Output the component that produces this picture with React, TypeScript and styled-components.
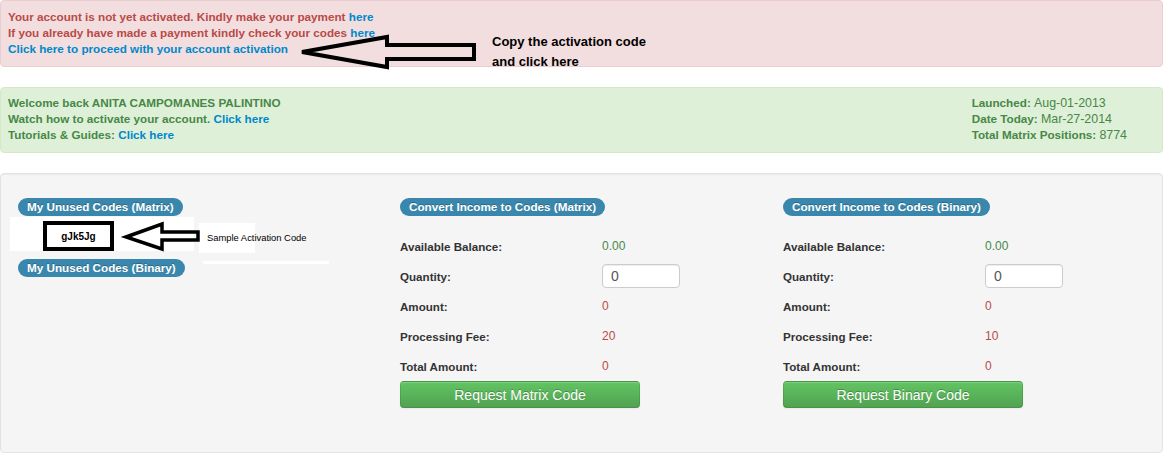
import React from 'react';
import styled, { createGlobalStyle } from 'styled-components';

const GlobalStyle = createGlobalStyle`
  html, body {
    margin: 0;
    padding: 0;
    background: #fff;
  }
  body {
    font-family: "Liberation Sans", Arial, sans-serif;
    color: #333;
  }
`;

const Page = styled.div`
  width: 1163px;
`;

type Tone = 'error' | 'success';

const tones = {
    error: { bg: '#f2dede', border: '#ebccd1', text: '#b94a48', pad: '8px 35px 9px 7px' },
    success: { bg: '#dff0d8', border: '#d6e9c6', text: '#468847', pad: '7px 35px 9px 7px' },
};

const Alert = styled.div<{ $tone: Tone }>`
  position: relative;
  display: flex;
  justify-content: space-between;
  padding: ${p => tones[p.$tone].pad};
  margin-bottom: 20px;
  border: 1px solid ${p => tones[p.$tone].border};
  border-radius: 4px;
  background: ${p => tones[p.$tone].bg};
  color: ${p => tones[p.$tone].text};
  font-size: 11.7px;
  font-weight: bold;
  line-height: 16px;
`;

const Lines = styled.div`
  display: flex;
  flex-direction: column;
  white-space: nowrap;
`;

const Link = styled.a`
  color: #0088cc;
  font-weight: bold;
  text-decoration: none;
  cursor: pointer;
`;

const Stat = styled.div`
  font-size: 11.7px;
`;

const StatValue = styled.span`
  font-weight: normal;
  font-size: 12.4px;
`;

// hand-drawn callout pasted over the activation notice
const CalloutArrow = styled.svg`
  position: absolute;
  left: 297px;
  top: 32px;
  overflow: visible;
`;

const CalloutText = styled.div`
  position: absolute;
  left: 491px;
  top: 31px;
  color: #000;
  font-size: 13px;
  font-weight: bold;
  line-height: 20px;
  white-space: nowrap;
`;

const Well = styled.div`
  display: grid;
  grid-template-columns: 382px 383px 1fr;
  padding: 24px 17px 44px;
  background: #f5f5f5;
  border: 1px solid #e3e3e3;
  border-radius: 4px;
  box-shadow: inset 0 1px 1px rgba(0, 0, 0, 0.05);
`;

const Column = styled.div`
  display: flex;
  flex-direction: column;
  align-items: flex-start;
`;

const Badge = styled.span`
  display: inline-block;
  padding: 2px 9px;
  border-radius: 9px;
  background: #3a87ad;
  color: #fff;
  font-size: 11.7px;
  font-weight: bold;
  line-height: 14px;
  white-space: nowrap;
  text-shadow: 0 -1px 0 rgba(0, 0, 0, 0.25);
`;

const CodeStrip = styled.div`
  position: relative;
  display: flex;
  align-items: flex-start;
  height: 43px;
  margin-left: -8px;
`;

const CodeCard = styled.div`
  box-sizing: border-box;
  width: 184px;
  height: 34px;
  margin-top: 1px;
  padding: 4px 0 0 33px;
  background: #fff;
`;

const CodeBox = styled.div`
  box-sizing: border-box;
  width: 71px;
  height: 30px;
  border: 4px solid #000;
  display: flex;
  align-items: center;
  justify-content: center;
  color: #000;
  font-size: 10px;
  font-weight: bold;
`;

const NoteCard = styled.div`
  box-sizing: border-box;
  width: 56px;
  height: 30px;
  margin: 7px 0 0 5px;
  padding-left: 8px;
  background: #fff;
  color: #000;
  font-size: 9.4px;
  line-height: 30px;
  white-space: nowrap;
`;

const PointerArrow = styled.svg`
  position: absolute;
  left: 110px;
  top: 3px;
  overflow: visible;
`;

const Underline = styled.div`
  position: absolute;
  left: 193px;
  top: 45px;
  width: 126px;
  height: 3px;
  background: #fff;
`;

const FormRows = styled.div`
  margin-top: 15px;
  display: flex;
  flex-direction: column;
`;

const Row = styled.div`
  display: grid;
  grid-template-columns: 202px auto;
  align-items: center;
  height: 30px;
`;

const Label = styled.span`
  color: #333;
  font-size: 11.6px;
  font-weight: bold;
`;

const Value = styled.span<{ $color: string }>`
  color: ${p => p.$color};
  font-size: 12px;
`;

const QtyInput = styled.input`
  box-sizing: border-box;
  width: 78px;
  height: 24px;
  padding: 2px 8px;
  border: 1px solid #ccc;
  border-radius: 4px;
  background: #fff;
  box-shadow: inset 0 1px 1px rgba(0, 0, 0, 0.075);
  color: #555;
  font-family: inherit;
  font-size: 14px;
  outline: none;
`;

const RequestButton = styled.button`
  box-sizing: border-box;
  width: 240px;
  height: 27px;
  padding: 0;
  border: 1px solid;
  border-color: rgba(0, 0, 0, 0.1) rgba(0, 0, 0, 0.1) rgba(0, 0, 0, 0.25);
  border-radius: 4px;
  background: linear-gradient(to bottom, #62c462, #51a351);
  box-shadow: inset 0 1px 0 rgba(255, 255, 255, 0.2), 0 1px 2px rgba(0, 0, 0, 0.05);
  color: #fff;
  font-family: inherit;
  font-size: 14px;
  text-shadow: 0 -1px 0 rgba(0, 0, 0, 0.25);
  cursor: pointer;
`;

const GREEN = '#468847';
const RED = '#b94a48';

type ConvertProps = {
    title: string;
    fee: number;
    action: string;
};

const ConvertForm = ({ title, fee, action }: ConvertProps) => (
    <Column>
        <Badge>{title}</Badge>
        <FormRows>
            <Row>
                <Label>Available Balance:</Label>
                <Value $color={GREEN}>0.00</Value>
            </Row>
            <Row>
                <Label>Quantity:</Label>
                <QtyInput type="text" defaultValue="0" />
            </Row>
            <Row>
                <Label>Amount:</Label>
                <Value $color={RED}>0</Value>
            </Row>
            <Row>
                <Label>Processing Fee:</Label>
                <Value $color={RED}>{fee}</Value>
            </Row>
            <Row>
                <Label>Total Amount:</Label>
                <Value $color={RED}>0</Value>
            </Row>
        </FormRows>
        <RequestButton>{action}</RequestButton>
    </Column>
);

const App = () => (
    <Page>
        <GlobalStyle />
        <Alert $tone="error">
            <Lines>
                <span>Your account is not yet activated. Kindly make your payment <Link>here</Link></span>
                <span>If you already have made a payment kindly check your codes <Link>here</Link></span>
                <span><Link>Click here to proceed with your account activation</Link></span>
            </Lines>
            <CalloutArrow width="184" height="40">
                <polygon
                    points="4,19 89,4 89,12 176,12 176,26 89,26 89,34"
                    fill="none"
                    stroke="#000"
                    strokeWidth="4"
                    strokeLinejoin="miter"
                />
            </CalloutArrow>
            <CalloutText>
                Copy the activation code<br />and click here
            </CalloutText>
        </Alert>

        <Alert $tone="success">
            <Lines>
                <span>Welcome back ANITA CAMPOMANES PALINTINO</span>
                <span>Watch how to activate your account. <Link>Click here</Link></span>
                <span>Tutorials &amp; Guides: <Link>Click here</Link></span>
            </Lines>
            <Lines>
                <Stat>Launched: <StatValue>Aug-01-2013</StatValue></Stat>
                <Stat>Date Today: <StatValue>Mar-27-2014</StatValue></Stat>
                <Stat>Total Matrix Positions: <StatValue>8774</StatValue></Stat>
            </Lines>
        </Alert>

        <Well>
            <Column>
                <Badge>My Unused Codes (Matrix)</Badge>
                <CodeStrip>
                    <CodeCard>
                        <CodeBox>gJk5Jg</CodeBox>
                    </CodeCard>
                    <NoteCard>Sample Activation Code</NoteCard>
                    <PointerArrow width="84" height="34">
                        <polygon
                            points="6,18 42,5 42,13 78,13 78,21 42,21 42,30"
                            fill="none"
                            stroke="#000"
                            strokeWidth="3.5"
                            strokeLinejoin="miter"
                        />
                    </PointerArrow>
                    <Underline />
                </CodeStrip>
                <Badge>My Unused Codes (Binary)</Badge>
            </Column>
            <ConvertForm title="Convert Income to Codes (Matrix)" fee={20} action="Request Matrix Code" />
            <ConvertForm title="Convert Income to Codes (Binary)" fee={10} action="Request Binary Code" />
        </Well>
    </Page>
);

export default App;
